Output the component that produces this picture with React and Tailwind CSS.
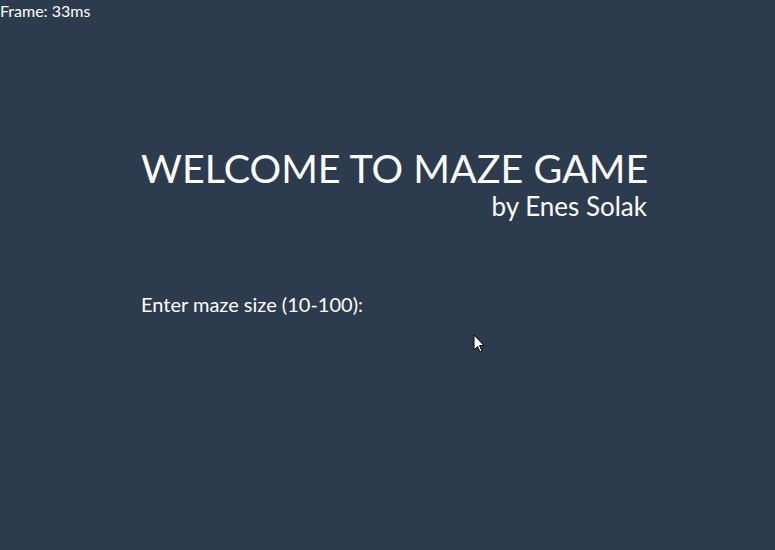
export default function App() {
  return (
    <div className="relative h-[550px] w-[775px] overflow-hidden bg-[#2d3b4e] text-white" style={{ fontFamily: "Lato, 'Open Sans', sans-serif" }}>
      {/* Frame counter */}
      <div className="pt-[2px] text-[16px] leading-[18px]">Frame: 33ms</div>

      {/* Title block */}
      <div className="ml-[141px] mt-[124px] flex w-[506px] flex-col">
        <h1 className="text-[39.5px] leading-[48px] whitespace-nowrap">WELCOME TO MAZE GAME</h1>
        <div className="self-end text-[26px] leading-[28px]">by Enes Solak</div>
      </div>

      <div className="ml-[141px] mt-[72px] text-[20px] leading-[24px]">Enter maze size (10-100):</div>

      {/* mouse pointer */}
      <svg className="absolute left-[473px] top-[334px]" width="13" height="20" viewBox="0 0 13 20">
        <path d="M1 1 L1 16 L4.5 12.5 L7 18 L9 17 L6.5 11.5 L11 11.5 Z" fill="#fff" stroke="#000" strokeWidth="1" />
      </svg>
    </div>
  );
}
